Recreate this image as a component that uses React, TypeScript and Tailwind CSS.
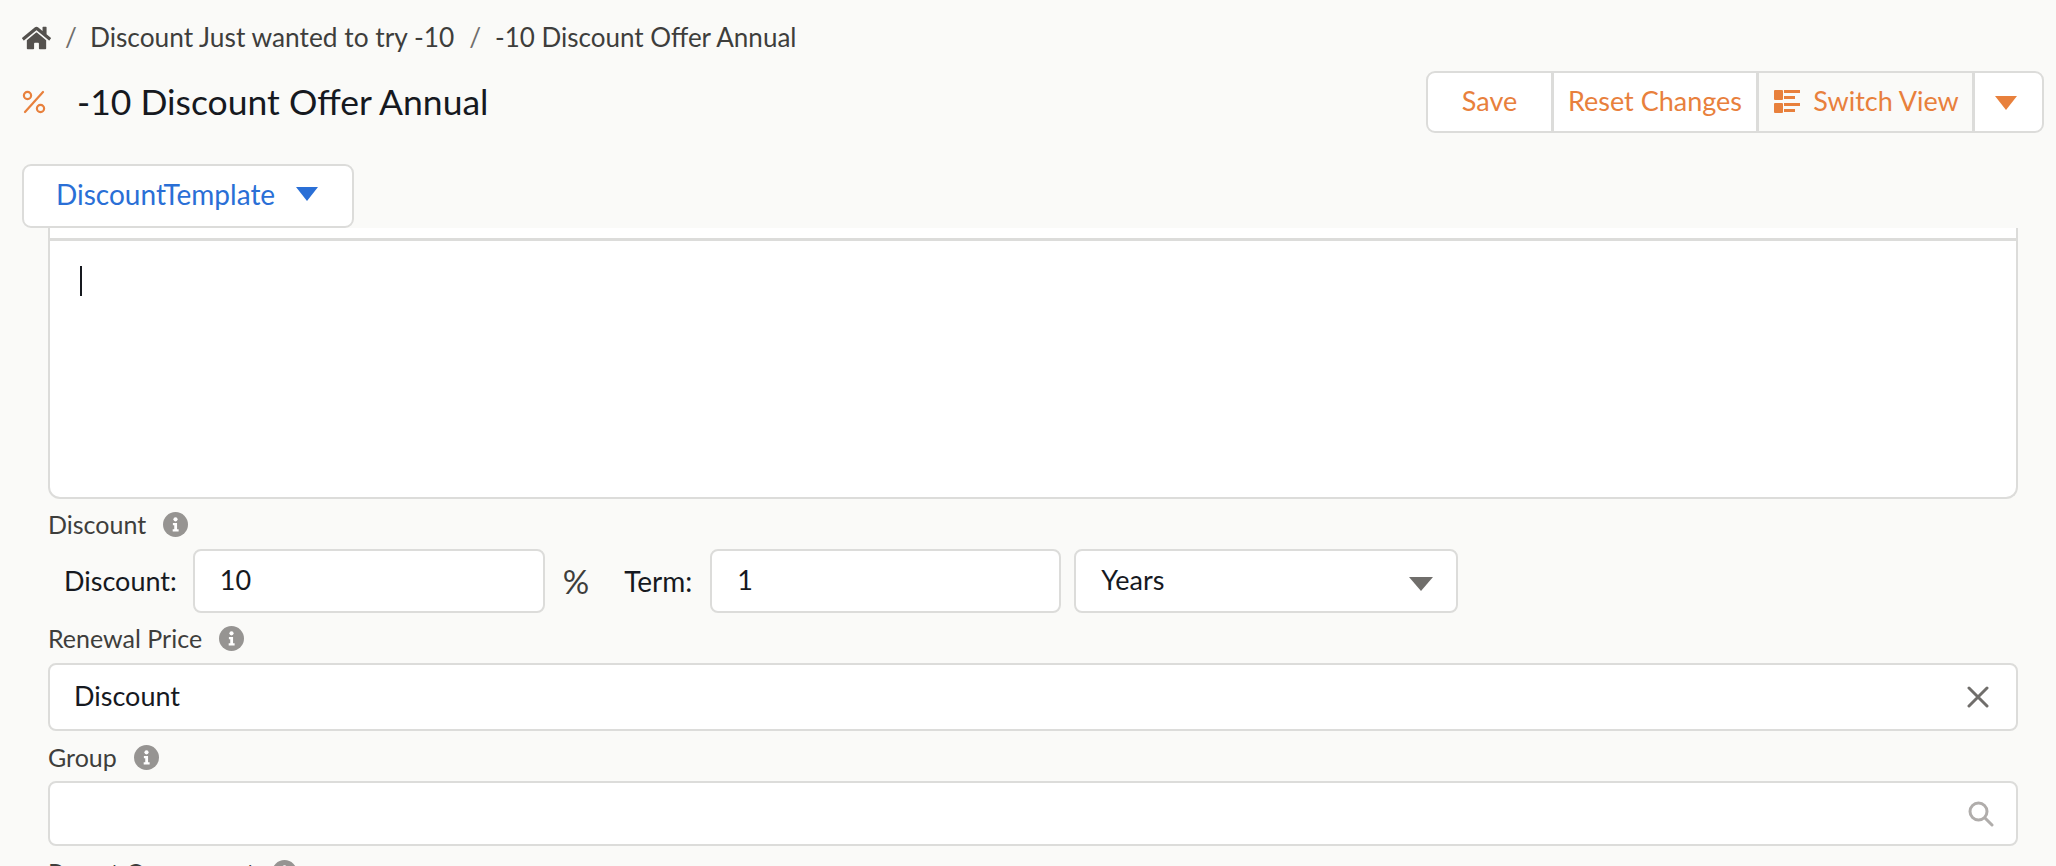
import { FaHome } from "react-icons/fa";

const orange = "text-[#e8803c]";

function InfoIcon() {
  return (
    <svg viewBox="0 0 24 24" className="h-[25px] w-[25px] shrink-0">
      <circle cx="12" cy="12" r="12" fill="#969492" />
      <circle cx="12" cy="7" r="2" fill="#fff" />
      <path d="M9.5 10.5h4v6h1.5v2.2H9.3v-2.2h1.5v-3.8H9.5z" fill="#fff" />
    </svg>
  );
}

function PercentIcon() {
  return (
    <svg viewBox="0 0 24 24" className="h-[24px] w-[24px]" fill="none" stroke="#e8803c" strokeWidth="2.2">
      <circle cx="5.5" cy="5.5" r="3.6" />
      <circle cx="18.5" cy="18.5" r="3.6" />
      <path d="M21 2 3 22" strokeLinecap="round" />
    </svg>
  );
}

function SwitchIcon() {
  return (
    <svg viewBox="0 0 26 26" className="h-[26px] w-[26px]" fill="#e8803c">
      <rect x="0" y="2" width="9" height="10" rx="1" />
      <rect x="0" y="15" width="9" height="10" rx="1" />
      <rect x="10" y="2" width="16" height="3" />
      <rect x="10" y="8" width="11" height="3" />
      <rect x="10" y="15" width="16" height="3" />
      <rect x="10" y="21" width="11" height="3" />
    </svg>
  );
}

function Caret({ className }: { className: string }) {
  return <span className={`h-0 w-0 border-x-solid border-x-transparent border-t-solid ${className}`} />;
}

function Label({ text }: { text: string }) {
  return (
    <div className="flex h-[25px] items-center gap-[17px] text-[25px] text-[#3e3e3c]">
      <span>{text}</span>
      <InfoIcon />
    </div>
  );
}

function ActionButton({ children, className }: { children: React.ReactNode; className: string }) {
  return (
    <button className={`flex items-center justify-center pb-[2px] text-[27px] ${orange} ${className}`}>
      {children}
    </button>
  );
}

export default function App() {
  return (
    <div className="h-[866px] overflow-hidden bg-[#fafaf8] font-['Lato','Open_Sans',sans-serif] text-[#16191f]">
      {/* breadcrumb */}
      <div className="flex h-[56px] items-center pl-[22px] pt-[19px] text-[26.3px] text-[#3e3e3c]">
        <FaHome className="h-[28px] w-[29px] text-[#54514e]" />
        <span className="ml-[14px] text-[#706e6b]">/</span>
        <span className="ml-[13px]">Discount Just wanted to try -10</span>
        <span className="ml-[15px] text-[#706e6b]">/</span>
        <span className="ml-[14px] text-[26px]">-10 Discount Offer Annual</span>
      </div>

      {/* title + actions */}
      <div className="mt-[15px] flex h-[62px] items-center justify-between pl-[22px] pr-[12px]">
        <div className="flex items-center">
          <PercentIcon />
          <h1 className="ml-[31px] pb-[1px] text-[35.5px] leading-none text-[#16191f]">-10 Discount Offer Annual</h1>
        </div>
        <div className="flex h-[62px] w-[618px] overflow-hidden rounded-[9px] border-2 border-[#dcdcda] bg-white">
          <ActionButton className="w-[126px] border-r-[3px] border-[#dcdcda]">Save</ActionButton>
          <ActionButton className="w-[205px] border-r-[3px] border-[#dcdcda]">Reset Changes</ActionButton>
          <ActionButton className="w-[216px] gap-[13px] border-r-[3px] border-[#dcdcda] bg-[#fafaf8] pl-[2px]">
            <SwitchIcon />
            Switch View
          </ActionButton>
          <ActionButton className="flex-1">
            <Caret className="mr-[6px] mt-[4px] border-x-[11px] border-t-[14px] border-t-[#e8803c]" />
          </ActionButton>
        </div>
      </div>

      {/* tab */}
      <div className="ml-[22px] mt-[31px] flex h-[64px] w-[332px] items-center rounded-[9px] border-2 border-[#dcdcda] bg-white pb-[4px] pl-[32px] text-[28px] text-[#2a6fd6]">
        DiscountTemplate
        <Caret className="ml-[21px] border-x-[11px] border-t-[14px] border-t-[#2a6fd6]" />
      </div>

      <div className="ml-[48px] w-[1970px]">
        {/* editor */}
        <div className="h-[271px] rounded-b-[12px] border-x-2 border-b-2 border-[#dcdcda] bg-white pt-[10px]">
          <div className="h-[3px] bg-[#dcdcda]" />
          <div className="ml-[30px] mt-[25px] h-[30px] w-[2px] bg-[#16191f]" />
        </div>

        <div className="mt-[13px]">
          <Label text="Discount" />
        </div>
        <div className="mt-[12px] flex h-[64px] items-center text-[27px]">
          <span className="ml-[16px]">Discount:</span>
          <div className="ml-[16px] flex h-full w-[352px] items-center rounded-[8px] border-2 border-[#dcdcda] bg-white pb-[2px] pl-[25px]">10</div>
          <span className="ml-[18px] text-[33px] leading-none text-[#3e3e3c]">%</span>
          <span className="ml-[35px] text-[28px]">Term:</span>
          <div className="ml-[18px] flex h-full w-[351px] items-center rounded-[8px] border-2 border-[#dcdcda] bg-white pb-[2px] pl-[25px]">1</div>
          <div className="ml-[13px] flex h-full w-[384px] items-center justify-between rounded-[8px] border-2 border-[#dcdcda] bg-white pb-[2px] pl-[25px] pr-[23px]">
            Years
            <Caret className="mt-[7px] border-x-[12px] border-t-[14px] border-t-[#706e6b]" />
          </div>
        </div>

        <div className="mt-[13px]">
          <Label text="Renewal Price" />
        </div>
        <div className="mt-[12px] flex h-[68px] items-center justify-between rounded-[8px] border-2 border-[#dcdcda] bg-white pl-[24px] pr-[27px] text-[27px]">
          <span className="pb-[2px]">Discount</span>
          <svg viewBox="0 0 22 22" className="h-[22px] w-[22px]" stroke="#706e6b" strokeWidth="3" strokeLinecap="round">
            <path d="M2 2l18 18M20 2 2 20" />
          </svg>
        </div>

        <div className="mt-[14px]">
          <Label text="Group" />
        </div>
        <div className="mt-[11px] flex h-[65px] items-center justify-end rounded-[8px] border-2 border-[#dcdcda] bg-white pr-[22px]">
          <svg viewBox="0 0 26 26" className="h-[26px] w-[26px]" fill="none" stroke="#b0adab" strokeWidth="3" strokeLinecap="round">
            <circle cx="10.5" cy="10.5" r="8.5" />
            <path d="M17 17l7 7" />
          </svg>
        </div>

        <div className="mt-[14px]">
          <Label text="Parent Component" />
        </div>
      </div>
    </div>
  );
}
